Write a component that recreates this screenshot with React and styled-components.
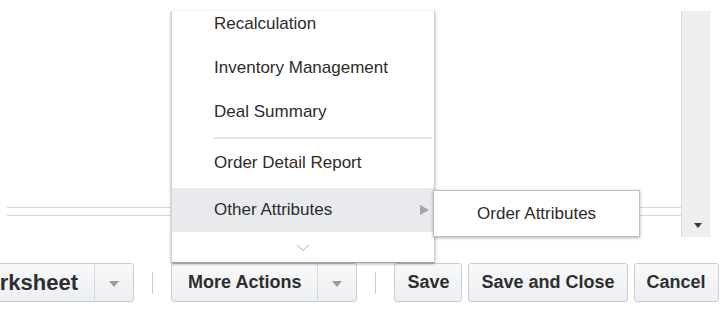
import React from "react";
import styled, { createGlobalStyle } from "styled-components";

const GlobalStyle = createGlobalStyle`
  html, body {
    margin: 0;
    padding: 0;
    background: #ffffff;
  }
  body {
    font-family: "Liberation Sans", Arial, sans-serif;
    color: #333;
  }
  * {
    box-sizing: border-box;
  }
`;

const menuItems = [
  { label: "Recalculation" },
  { label: "Inventory Management" },
  { label: "Deal Summary", divider: true },
  { label: "Order Detail Report" },
  { label: "Other Attributes", active: true, submenu: ["Order Attributes"] },
];

export default function App() {
  return (
    <>
      <GlobalStyle />
      <Page>
        <Panel>
          <Grid>
            <GridBody />
            <HScroll />
          </Grid>
          <VScroll>
            <DownArrow />
          </VScroll>
        </Panel>

        <Toolbar>
          <SplitButton>
            <SplitMain $size={22}>Worksheet</SplitMain>
            <SplitArrow>
              <Caret />
            </SplitArrow>
          </SplitButton>
          <Separator />
          <SplitButton>
            <SplitMain>More Actions</SplitMain>
            <SplitArrow>
              <Caret />
            </SplitArrow>
            <Menu>
              <MenuList>
                {menuItems.map((item) => (
                  <React.Fragment key={item.label}>
                    <MenuItem $active={item.active}>
                      {item.label}
                      {item.submenu && (
                        <>
                          <SubArrow />
                          <SubMenu>
                            {item.submenu.map((s) => (
                              <SubItem key={s}>{s}</SubItem>
                            ))}
                          </SubMenu>
                        </>
                      )}
                    </MenuItem>
                    {item.divider && <MenuDivider />}
                  </React.Fragment>
                ))}
                <MenuMore>
                  <svg width="14" height="8" viewBox="0 0 14 8">
                    <polyline
                      points="1,1 7,6.5 13,1"
                      fill="none"
                      stroke="#c9cdd2"
                      strokeWidth="1.2"
                    />
                  </svg>
                </MenuMore>
              </MenuList>
            </Menu>
          </SplitButton>
          <Separator />
          <Buttons>
            <Button>Save</Button>
            <Button>Save and Close</Button>
            <Button>Cancel</Button>
          </Buttons>
        </Toolbar>
      </Page>
    </>
  );
}

const Page = styled.div`
  position: relative;
  width: 726px;
  height: 310px;
  overflow: hidden;
  padding-top: 11px;
`;

const Panel = styled.div`
  display: flex;
  height: 226px;
  margin-left: 7px;
  width: 703px;
`;

const Grid = styled.div`
  flex: 1;
  display: flex;
  flex-direction: column;
`;

const GridBody = styled.div`
  height: 197px;
  border-bottom: 1px solid #cfd8e1;
`;

const HScroll = styled.div`
  flex: 1;
  margin-top: 7px;
  border-top: 1px solid #cfd8e1;
`;

const VScroll = styled.div`
  width: 29px;
  background: #efefef;
  border-left: 1px solid #d3dae1;
  display: flex;
  flex-direction: column;
  justify-content: flex-end;
  align-items: center;
  padding-bottom: 9px;
`;

const DownArrow = styled.span`
  width: 0;
  height: 0;
  margin-left: 3px;
  border-left: 4.5px solid transparent;
  border-right: 4.5px solid transparent;
  border-top: 5px solid #3a3a3a;
`;

const Toolbar = styled.div`
  display: flex;
  align-items: center;
  height: 39px;
  margin-top: 26px;
  margin-left: -51px;
`;

const SplitButton = styled.div`
  position: relative;
  display: flex;
  height: 39px;
  border: 1px solid #c6ced6;
  border-radius: 3px;
  background: linear-gradient(#f8f9fa, #eceef1);
`;

const SplitMain = styled.div`
  display: flex;
  align-items: center;
  padding: 0 16px;
  font-size: ${(p) => p.$size || 18}px;
  font-weight: bold;
  color: #2e2e2e;
  white-space: nowrap;
  border-right: 1px solid #d3d9df;
`;

const SplitArrow = styled.div`
  width: 38px;
  display: flex;
  align-items: center;
  justify-content: center;
`;

const Caret = styled.span`
  width: 0;
  height: 0;
  border-left: 5px solid transparent;
  border-right: 5px solid transparent;
  border-top: 6px solid #9b9b9b;
  margin-top: 2px;
`;

const Separator = styled.div`
  width: 1px;
  height: 22px;
  margin: 0 18px;
  background: #c7cdd3;
`;

const Buttons = styled.div`
  display: flex;
  gap: 6px;
`;

const Button = styled.button`
  height: 39px;
  padding: 0 12px;
  font-family: "Liberation Sans", Arial, sans-serif;
  font-size: 18px;
  font-weight: bold;
  color: #2e2e2e;
  border: 1px solid #c6ced6;
  border-radius: 3px;
  background: linear-gradient(#f8f9fa, #eceef1);
  white-space: nowrap;
`;

const Menu = styled.div`
  position: absolute;
  left: -1px;
  bottom: calc(100% + 1px);
  width: 264px;
  background: #ffffff;
  border: 1px solid #c8d0d9;
  border-top: none;
  border-bottom-color: #9aa2ab;
  box-shadow: 0 1px 3px rgba(0, 0, 0, 0.3);
  z-index: 5;
`;

const MenuList = styled.div`
  display: flex;
  flex-direction: column;
  margin-top: -9px;
`;

const MenuItem = styled.div`
  position: relative;
  height: 44px;
  display: flex;
  align-items: center;
  padding-left: 42px;
  font-size: 17px;
  color: #2c2c2c;
  white-space: nowrap;
  background: ${(p) => (p.$active ? "#e8eaed" : "transparent")};
  margin-top: ${(p) => (p.$active ? "3px" : "0")};
`;

const MenuDivider = styled.div`
  height: 2px;
  margin: 3px 2px 2px 41px;
  background: #e4e7ea;
`;

const MenuMore = styled.div`
  height: 30px;
  display: flex;
  align-items: center;
  justify-content: center;
  padding-top: 2px;
`;

const SubArrow = styled.span`
  position: absolute;
  right: 5px;
  top: 17px;
  width: 0;
  height: 0;
  border-top: 5.5px solid transparent;
  border-bottom: 5.5px solid transparent;
  border-left: 9px solid #a3a3a3;
`;

const SubMenu = styled.div`
  position: absolute;
  left: 261px;
  top: 2px;
  width: 207px;
  height: 47px;
  background: #ffffff;
  border: 1px solid #b7c1cb;
  box-shadow: 0 1px 3px rgba(0, 0, 0, 0.3);
  display: flex;
  align-items: center;
  justify-content: center;
  z-index: 6;
`;

const SubItem = styled.div`
  font-size: 17px;
  color: #2c2c2c;
  white-space: nowrap;
`;
